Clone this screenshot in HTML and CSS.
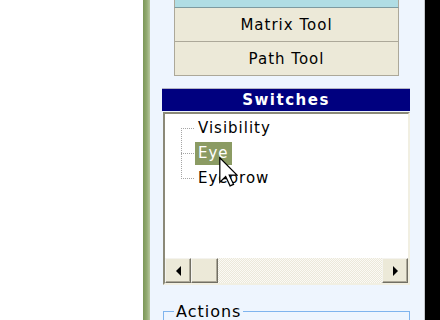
FILE: index.html
```html
<!DOCTYPE html>
<html lang="en">
<head>
    <meta charset="UTF-8">
    <title>Switches</title>
    <link rel="stylesheet" href="styles.css">
</head>
<body>
    <div class="desk"></div>
    <div class="stripe"></div>
    <div class="panel">
        <div class="tools">
            <div class="tool active"></div>
            <div class="tool">Matrix Tool</div>
            <div class="tool">Path Tool</div>
        </div>
        <div class="switches">
            <div class="title">Switches</div>
            <div class="tree">
                <ul class="nodes">
                    <li><span>Visibility</span></li>
                    <li><span class="sel">Eye</span></li>
                    <li><span>Eyebrow</span></li>
                </ul>
                <div class="hscroll">
                    <div class="sbtn"><i class="arr-l"></i></div>
                    <div class="thumb"></div>
                    <div class="track"></div>
                    <div class="sbtn"><i class="arr-r"></i></div>
                </div>
            </div>
        </div>
        <fieldset class="actions">
            <legend>Actions</legend>
        </fieldset>
    </div>
    <div class="outside"></div>
    <svg class="cursor" width="19" height="30" viewBox="0 0 12 19">
        <path d="M0.5 0.5 L0.5 16 L4.2 12.4 L7 18.3 L9.2 17.3 L6.5 11.5 L11.4 11.5 Z" fill="#fff" stroke="#000" stroke-width="0.8" stroke-linejoin="miter"/>
    </svg>
</body>
</html>
```

FILE: styles.css
```css
*{ margin: 0; padding: 0; list-style: none; box-sizing: border-box}
html,body{
    width:440px;
    height:320px;
    overflow: hidden;
}
body{
    display: flex;
    font-family: "DejaVu Sans", Verdana, sans-serif;
    font-size: 15px;
    letter-spacing: 1px;
    color: #000;
    background: #fff;
}
.desk{
    width:143px;
    background: #fff;
}
.stripe{
    width:7px;
    background: linear-gradient(to right, #7b9757, #93ab72 55%, #b8c8a0);
}
.panel{
    width:275px;
    background: #eef5fe;
    border-right: 1px solid #c4c8cc;
    display: flex;
    flex-direction: column;
}
.outside{
    flex: 1;
    background: #000;
}
.tools{
    margin: -26px 25px 0 24px;
}
.tool{
    height:34px;
    line-height: 35px;
    text-align: center;
    background: #ece9d8;
    border: 1px solid #aca899;
    border-top: none;
}
.tool.active{
    background: #b0dde4;
    border-top: 1px solid #aca899;
    border-bottom-color: #7d9aa0;
}
.switches{
    margin: 12px 0 0 12px;
    width:248px;
}
.title{
    height:23px;
    line-height: 23px;
    background: #00007f;
    border-top: 1px solid #b4b4c4;
    color: #fff;
    font-weight: bold;
    letter-spacing: 1.5px;
    text-align: center;
}
.tree{
    margin: 1px 0 0 1px;
    height:173px;
    background: #fff;
    border: 2px solid;
    border-color: #8b8978 #f1efe2 #f1efe2 #8b8978;
    display: flex;
    flex-direction: column;
}
.nodes{
    flex: 1;
    margin-left: 16px;
    padding-top: 2px;
    background: repeating-linear-gradient(#a5a5a5 0 1px, transparent 1px 2px) 0 14px / 1px 51px no-repeat;
}
.nodes li{
    height:25px;
    display: flex;
    align-items: center;
}
.nodes li::before{
    content: '';
    width:14px;
    height:1px;
    background: repeating-linear-gradient(to right, #a5a5a5 0 1px, transparent 1px 2px);
}
.nodes span{
    height:23px;
    line-height: 23px;
    padding: 0 3px;
}
.sel{
    background: #8b9b63;
    color: #fff;
}
.hscroll{
    height:25px;
    display: flex;
}
.sbtn,.thumb{
    background: #ece9d8;
    border: 1px solid;
    border-color: #f4f3ee #716f64 #716f64 #f4f3ee;
    box-shadow: inset -1px -1px 0 #aca899;
    display: flex;
    align-items: center;
    justify-content: center;
}
.sbtn{
    width:26px;
}
.thumb{
    width:27px;
}
.track{
    flex: 1;
    background: repeating-conic-gradient(#ebe8da 0 25%, #fbfaf5 0 50%) 0 0 / 2px 2px;
}
.arr-l{
    border: 5px solid transparent;
    border-right: 5px solid #000;
    border-left: none;
}
.arr-r{
    border: 5px solid transparent;
    border-left: 5px solid #000;
    border-right: none;
}
.actions{
    margin: 17px 0 0 13px;
    width:247px;
    height:40px;
    border: 1px solid #7fb4ee;
    padding: 0 10px;
}
.actions legend{
    padding: 0 2px;
    font-size: 16px;
}
.cursor{
    position: absolute;
    left:219px;
    top:157px;
}
```
